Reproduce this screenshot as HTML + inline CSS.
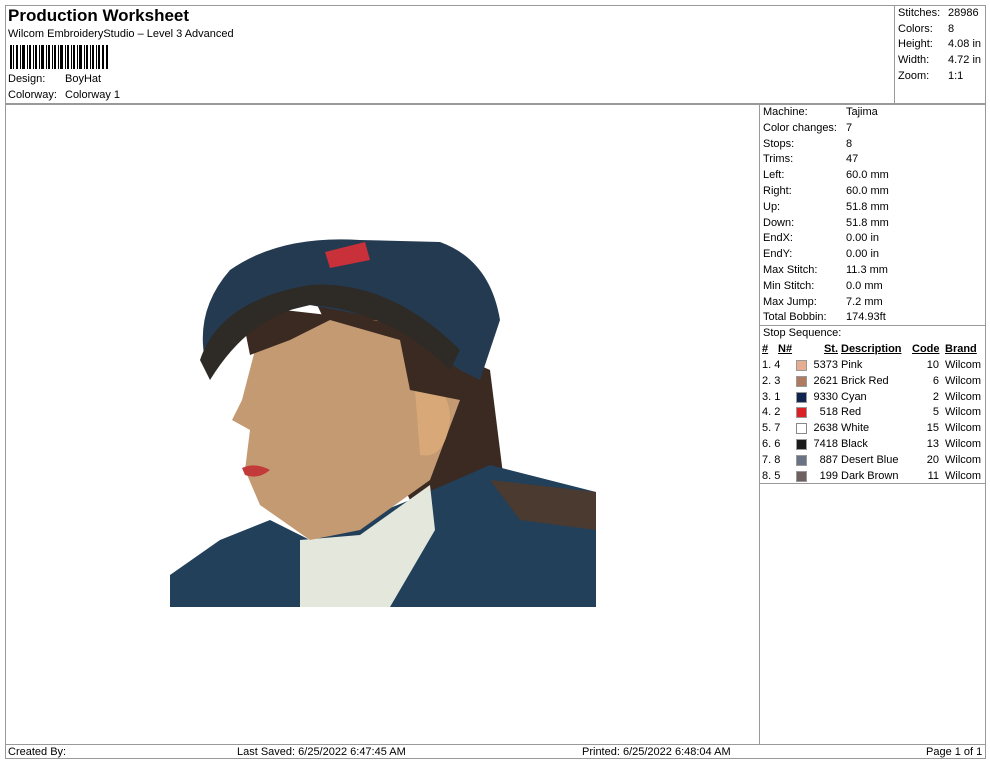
<!DOCTYPE html>
<html><head><style>
*{margin:0;padding:0}
body{width:990px;height:762px;background:#fff;font-family:"Liberation Sans",Arial,sans-serif;font-size:11px;color:#000;position:relative;overflow:hidden}
.a{position:absolute;white-space:nowrap}
.l{position:absolute;background:#999}
.u span{text-decoration:underline;font-weight:bold}
</style></head><body>
<div class="l" style="left:5px;top:5px;width:980px;height:1px"></div>
<div class="l" style="left:5px;top:5px;width:1px;height:753px"></div>
<div class="l" style="left:985px;top:5px;width:1px;height:753px"></div>
<div class="l" style="left:5px;top:758px;width:981px;height:1px"></div>
<div class="l" style="left:5px;top:103px;width:980px;height:2px"></div>
<div class="l" style="left:894px;top:5px;width:1px;height:98px"></div>
<div class="l" style="left:759px;top:104px;width:1px;height:640px"></div>
<div class="l" style="left:759px;top:325px;width:226px;height:1px"></div>
<div class="l" style="left:759px;top:483px;width:226px;height:1px"></div>
<div class="l" style="left:5px;top:744px;width:980px;height:1px"></div>

<div class="a" style="left:8px;top:6px;font-size:17px;font-weight:bold">Production Worksheet</div>
<div class="a" style="left:8px;top:28px">Wilcom EmbroideryStudio – Level 3 Advanced</div>
<svg class="a" style="left:10px;top:45px" width="100" height="24">
<g fill="#000">
<rect x="0" width="2" height="24"/><rect x="3" width="1" height="24"/><rect x="6" width="2" height="24"/><rect x="10" width="1" height="24"/><rect x="12" width="3" height="24"/><rect x="17" width="1" height="24"/><rect x="19" width="2" height="24"/><rect x="23" width="1" height="24"/><rect x="25" width="2" height="24"/><rect x="29" width="1" height="24"/><rect x="31" width="3" height="24"/><rect x="36" width="1" height="24"/><rect x="38" width="2" height="24"/><rect x="42" width="1" height="24"/><rect x="44" width="2" height="24"/><rect x="48" width="1" height="24"/><rect x="50" width="3" height="24"/><rect x="55" width="1" height="24"/><rect x="57" width="2" height="24"/><rect x="61" width="1" height="24"/><rect x="63" width="2" height="24"/><rect x="67" width="1" height="24"/><rect x="69" width="3" height="24"/><rect x="74" width="1" height="24"/><rect x="76" width="2" height="24"/><rect x="80" width="1" height="24"/><rect x="82" width="2" height="24"/><rect x="86" width="1" height="24"/><rect x="88" width="2" height="24"/><rect x="92" width="2" height="24"/><rect x="96" width="2" height="24"/>
</g></svg>
<div class="a" style="left:8px;top:73px">Design:</div><div class="a" style="left:65px;top:73px">BoyHat</div>
<div class="a" style="left:8px;top:89px">Colorway:</div><div class="a" style="left:65px;top:89px">Colorway 1</div>

<div class="a" style="left:898px;top:6px;line-height:15.7px">Stitches:<br>Colors:<br>Height:<br>Width:<br>Zoom:</div>
<div class="a" style="left:948px;top:6px;line-height:15.7px">28986<br>8<br>4.08 in<br>4.72 in<br>1:1</div>

<div class="a" style="left:763px;top:105px;line-height:15.8px">Machine:<br>Color changes:<br>Stops:<br>Trims:<br>Left:<br>Right:<br>Up:<br>Down:<br>EndX:<br>EndY:<br>Max Stitch:<br>Min Stitch:<br>Max Jump:<br>Total Bobbin:<br>Stop Sequence:</div>
<div class="a" style="left:846px;top:105px;line-height:15.8px">Tajima<br>7<br>8<br>47<br>60.0 mm<br>60.0 mm<br>51.8 mm<br>51.8 mm<br>0.00 in<br>0.00 in<br>11.3 mm<br>0.0 mm<br>7.2 mm<br>174.93ft</div>

<div style="position:absolute;left:762px;top:342px;width:222px;line-height:15.8px">
<div class="u" style="position:relative;height:16px">
<span class="a" style="left:0">#</span><span class="a" style="left:16px">N#</span><span class="a" style="right:146px">St.</span><span class="a" style="left:79px">Description</span><span class="a" style="left:150px">Code</span><span class="a" style="left:183px">Brand</span></div>
</div>
<div style="position:absolute;left:762px;top:358px;width:222px;line-height:15.8px">
<div style="position:relative;height:15.8px"><span class="a" style="left:0">1. 4</span><span class="a" style="left:34px;top:2px;width:9px;height:9px;background:#e6ad90;border:1px solid #999"></span><span class="a" style="right:146px">5373</span><span class="a" style="left:79px">Pink</span><span class="a" style="right:45px">10</span><span class="a" style="left:183px">Wilcom</span></div>
<div style="position:relative;height:15.8px"><span class="a" style="left:0">2. 3</span><span class="a" style="left:34px;top:2px;width:9px;height:9px;background:#b07a60;border:1px solid #999"></span><span class="a" style="right:146px">2621</span><span class="a" style="left:79px">Brick Red</span><span class="a" style="right:45px">6</span><span class="a" style="left:183px">Wilcom</span></div>
<div style="position:relative;height:15.8px"><span class="a" style="left:0">3. 1</span><span class="a" style="left:34px;top:2px;width:9px;height:9px;background:#0f2550;border:1px solid #999"></span><span class="a" style="right:146px">9330</span><span class="a" style="left:79px">Cyan</span><span class="a" style="right:45px">2</span><span class="a" style="left:183px">Wilcom</span></div>
<div style="position:relative;height:15.8px"><span class="a" style="left:0">4. 2</span><span class="a" style="left:34px;top:2px;width:9px;height:9px;background:#dd1f26;border:1px solid #999"></span><span class="a" style="right:146px">518</span><span class="a" style="left:79px">Red</span><span class="a" style="right:45px">5</span><span class="a" style="left:183px">Wilcom</span></div>
<div style="position:relative;height:15.8px"><span class="a" style="left:0">5. 7</span><span class="a" style="left:34px;top:2px;width:9px;height:9px;background:#fff;border:1px solid #888"></span><span class="a" style="right:146px">2638</span><span class="a" style="left:79px">White</span><span class="a" style="right:45px">15</span><span class="a" style="left:183px">Wilcom</span></div>
<div style="position:relative;height:15.8px"><span class="a" style="left:0">6. 6</span><span class="a" style="left:34px;top:2px;width:9px;height:9px;background:#1a1a1a;border:1px solid #999"></span><span class="a" style="right:146px">7418</span><span class="a" style="left:79px">Black</span><span class="a" style="right:45px">13</span><span class="a" style="left:183px">Wilcom</span></div>
<div style="position:relative;height:15.8px"><span class="a" style="left:0">7. 8</span><span class="a" style="left:34px;top:2px;width:9px;height:9px;background:#6a7384;border:1px solid #999"></span><span class="a" style="right:146px">887</span><span class="a" style="left:79px">Desert Blue</span><span class="a" style="right:45px">20</span><span class="a" style="left:183px">Wilcom</span></div>
<div style="position:relative;height:15.8px"><span class="a" style="left:0">8. 5</span><span class="a" style="left:34px;top:2px;width:9px;height:9px;background:#6e6060;border:1px solid #999"></span><span class="a" style="right:146px">199</span><span class="a" style="left:79px">Dark Brown</span><span class="a" style="right:45px">11</span><span class="a" style="left:183px">Wilcom</span></div>
</div>

<svg class="a" style="left:160px;top:230px" width="450" height="390">
<path d="M150 60 L330 140 L345 260 L250 270 Z" fill="#3a2a22"/>
<path d="M10 345 L60 310 L110 290 L150 310 L250 270 L330 235 L436 262 L436 377 L10 377 Z" fill="#22405a"/>
<path d="M330 250 L436 262 L436 300 L360 290 Z" fill="#4a3a30"/>
<path d="M140 310 L200 305 L270 255 L275 300 L230 377 L140 377 Z" fill="#e4e8dc"/>
<path d="M110 90 L280 90 L300 170 L270 250 L200 300 L150 310 L100 275 L85 240 L90 200 L72 190 L82 170 L95 120 Z" fill="#c49a72"/>
<path d="M255 160 Q290 150 290 190 Q285 230 260 225 Z" fill="#d8a878"/>
<path d="M80 75 L300 100 L300 170 L250 160 L240 110 L170 90 L130 110 L90 125 Z" fill="#3a2a22"/>
<path d="M70 40 Q120 5 200 10 L280 12 Q330 30 340 90 L320 150 L300 140 L230 90 L150 75 L90 90 L45 130 Q35 80 70 40 Z" fill="#243a50"/>
<path d="M40 130 Q60 70 150 55 Q230 50 300 120 L290 140 Q230 80 150 75 Q90 85 50 150 Z" fill="#2e2a26"/>
<path d="M165 22 L205 12 L210 30 L170 38 Z" fill="#c8303a"/>
<path d="M82 238 Q95 232 110 240 Q98 250 85 245 Z" fill="#c23a3a"/>
</svg>

<div class="a" style="left:8px;top:746px">Created By:</div>
<div class="a" style="left:237px;top:746px">Last Saved: 6/25/2022 6:47:45 AM</div>
<div class="a" style="left:582px;top:746px">Printed: 6/25/2022 6:48:04 AM</div>
<div class="a" style="left:926px;top:746px">Page 1 of 1</div>
</body></html>
